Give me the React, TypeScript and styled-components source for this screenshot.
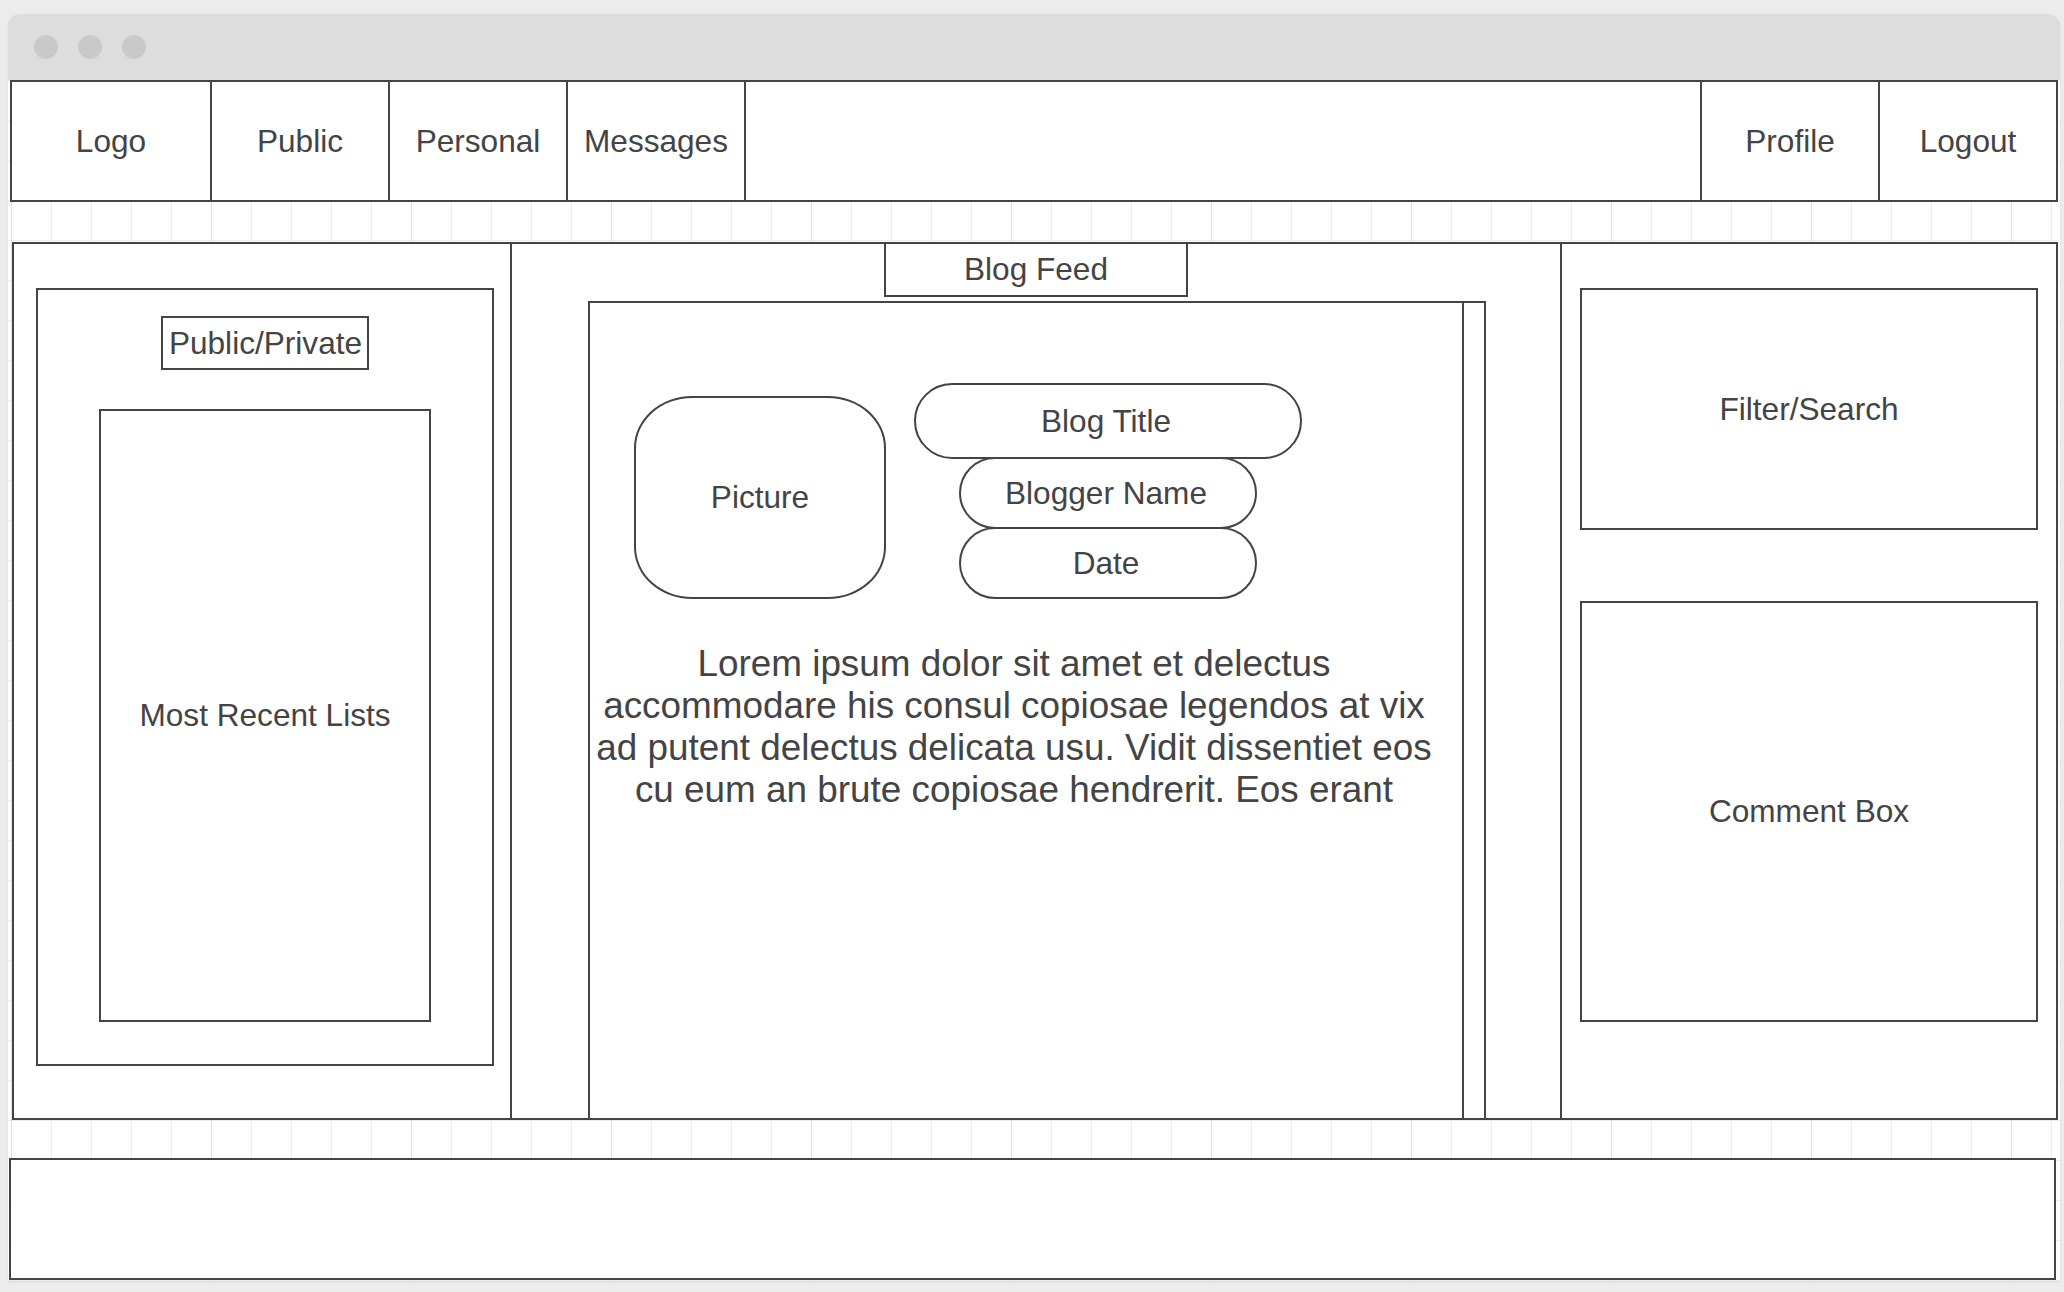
import React from 'react'
import styled, { createGlobalStyle } from 'styled-components'

const ink = '#444444'

const GlobalStyle = createGlobalStyle`
  html, body {
    margin: 0;
    padding: 0;
    background: #ececec;
  }
  body {
    font-family: "Liberation Sans", Arial, sans-serif;
    color: ${ink};
  }
`

const Page = styled.div`
  padding: 14px 4px 11px 8px;
`

const Window = styled.div`
  border-radius: 12px 12px 0 0;
  overflow: hidden;
  box-shadow: 0 1px 2px rgba(0, 0, 0, 0.08);
`

const TitleBar = styled.div`
  display: flex;
  align-items: center;
  gap: 20px;
  height: 66px;
  padding-left: 26px;
  background: #dddddd;
`

const Dot = styled.span`
  width: 24px;
  height: 24px;
  border-radius: 50%;
  background: #c9c9c9;
`

const Canvas = styled.div`
  display: flex;
  flex-direction: column;
  padding-bottom: 1px;
  background-color: #ffffff;
  background-image: linear-gradient(to right, #e0e0e0 1px, transparent 1px),
    linear-gradient(to right, #ededed 1px, transparent 1px),
    linear-gradient(to bottom, #ededed 1px, transparent 1px);
  background-size: 200px 100%, 40px 100%, 100% 40px;
  background-position: 3px 0, 3px 0, 0 0;
`

const NavBar = styled.nav`
  display: flex;
  height: 122px;
  margin: 0 2px;
  border: 2px solid ${ink};
  box-sizing: border-box;
  background: #fff;
`

const NavItem = styled.div<{ $width?: number; $last?: boolean }>`
  flex: ${(p) => (p.$width ? `0 0 ${p.$width}px` : '1')};
  display: flex;
  align-items: center;
  justify-content: center;
  box-sizing: border-box;
  border-right: ${(p) => (p.$last ? 'none' : `2px solid ${ink}`)};
  font-size: 31.6px;
`

const Main = styled.main`
  display: grid;
  grid-template-columns: 498px 1050px 1fr;
  height: 878px;
  margin: 40px 2px 38px 4px;
  border: 2px solid ${ink};
  box-sizing: border-box;
  background: #fff;
`

const Column = styled.section<{ $divider?: boolean }>`
  display: flex;
  flex-direction: column;
  align-items: stretch;
  min-width: 0;
  box-sizing: border-box;
  border-right: ${(p) => (p.$divider ? `2px solid ${ink}` : 'none')};
`

const LeftColumn = styled(Column)`
  padding: 44px 16px 52px 22px;
`

const CenterColumn = styled(Column)`
  padding: 0 74px 0 76px;
`

const RightColumn = styled(Column)`
  padding: 44px 18px 0 18px;
`

const Box = styled.div<{ $h?: number }>`
  display: flex;
  align-items: center;
  justify-content: center;
  box-sizing: border-box;
  height: ${(p) => (p.$h ? `${p.$h}px` : 'auto')};
  border: 2px solid ${ink};
  font-size: 31.6px;
`

const ListPanel = styled(Box)`
  flex: 1;
  flex-direction: column;
  justify-content: flex-start;
`

const ToggleLabel = styled.div`
  margin-top: 26px;
  height: 54px;
  padding: 0 5px 0 6px;
  border: 2px solid ${ink};
  box-sizing: border-box;
  line-height: 50px;
  font-size: 31.6px;
`

const RecentBox = styled(Box)`
  width: 332px;
  margin-top: 39px;
`

const FeedTitle = styled(Box)`
  align-self: center;
  width: 304px;
  margin-top: -2px;
  margin-left: -2px;
`

const FeedBox = styled.div`
  flex: 1;
  display: flex;
  margin-top: 4px;
  border: 2px solid ${ink};
  border-bottom: none;
`

const FeedContent = styled.div`
  flex: 1;
  padding-top: 80px;
  border-right: 2px solid ${ink};
`

const ScrollTrack = styled.div`
  flex: 0 0 20px;
`

const PostHeader = styled.div`
  display: flex;
  align-items: flex-end;
  gap: 28px;
  padding-left: 44px;
`

const Picture = styled.div`
  display: flex;
  align-items: center;
  justify-content: center;
  width: 252px;
  height: 203px;
  box-sizing: border-box;
  border: 2px solid ${ink};
  border-radius: 58px / 52px;
  font-size: 31.6px;
`

const PillStack = styled.div`
  display: flex;
  flex-direction: column;
  align-items: center;
  width: 388px;
`

const Pill = styled.div<{ $w: number; $h: number; $overlap?: boolean }>`
  display: flex;
  align-items: center;
  justify-content: center;
  width: ${(p) => p.$w}px;
  height: ${(p) => p.$h}px;
  margin-top: ${(p) => (p.$overlap ? '-2px' : '0')};
  padding-right: 4px;
  box-sizing: border-box;
  border: 2px solid ${ink};
  border-radius: 999px;
  background: #fff;
  font-size: 31.6px;
`

const PostBody = styled.p`
  margin: 44px 24px 0 0;
  font-size: 36.86px;
  line-height: 42.1px;
  text-align: center;
`

const SideBox = styled(Box)<{ $gap?: number }>`
  margin-top: ${(p) => p.$gap ?? 0}px;
`

const Footer = styled.footer`
  height: 122px;
  margin: 0 4px 0 1px;
  border: 2px solid ${ink};
  box-sizing: border-box;
  background: #fff;
`

const navLeft = [
  { label: 'Logo', width: 200 },
  { label: 'Public', width: 178 },
  { label: 'Personal', width: 178 },
  { label: 'Messages', width: 178 }
]

export default function App() {
  return (
    <>
      <GlobalStyle />
      <Page>
        <Window>
          <TitleBar>
            <Dot />
            <Dot />
            <Dot />
          </TitleBar>
          <Canvas>
            <NavBar>
              {navLeft.map((item) => (
                <NavItem key={item.label} $width={item.width}>
                  {item.label}
                </NavItem>
              ))}
              <NavItem />
              <NavItem $width={178}>Profile</NavItem>
              <NavItem $width={176} $last>
                Logout
              </NavItem>
            </NavBar>

            <Main>
              <LeftColumn $divider>
                <ListPanel>
                  <ToggleLabel>Public/Private</ToggleLabel>
                  <RecentBox $h={613}>Most Recent Lists</RecentBox>
                </ListPanel>
              </LeftColumn>

              <CenterColumn $divider>
                <FeedTitle $h={55}>Blog Feed</FeedTitle>
                <FeedBox>
                  <FeedContent>
                    <PostHeader>
                      <Picture>Picture</Picture>
                      <PillStack>
                        <Pill $w={388} $h={76}>
                          Blog Title
                        </Pill>
                        <Pill $w={298} $h={72} $overlap>
                          Blogger Name
                        </Pill>
                        <Pill $w={298} $h={72} $overlap>
                          Date
                        </Pill>
                      </PillStack>
                    </PostHeader>
                    <PostBody>
                      Lorem ipsum dolor sit amet et delectus accommodare his consul copiosae legendos at vix ad
                      putent delectus delicata usu. Vidit dissentiet eos cu eum an brute copiosae hendrerit. Eos
                      erant
                    </PostBody>
                  </FeedContent>
                  <ScrollTrack />
                </FeedBox>
              </CenterColumn>

              <RightColumn>
                <SideBox $h={242}>Filter/Search</SideBox>
                <SideBox $h={421} $gap={71}>
                  Comment Box
                </SideBox>
              </RightColumn>
            </Main>

            <Footer />
          </Canvas>
        </Window>
      </Page>
    </>
  )
}
